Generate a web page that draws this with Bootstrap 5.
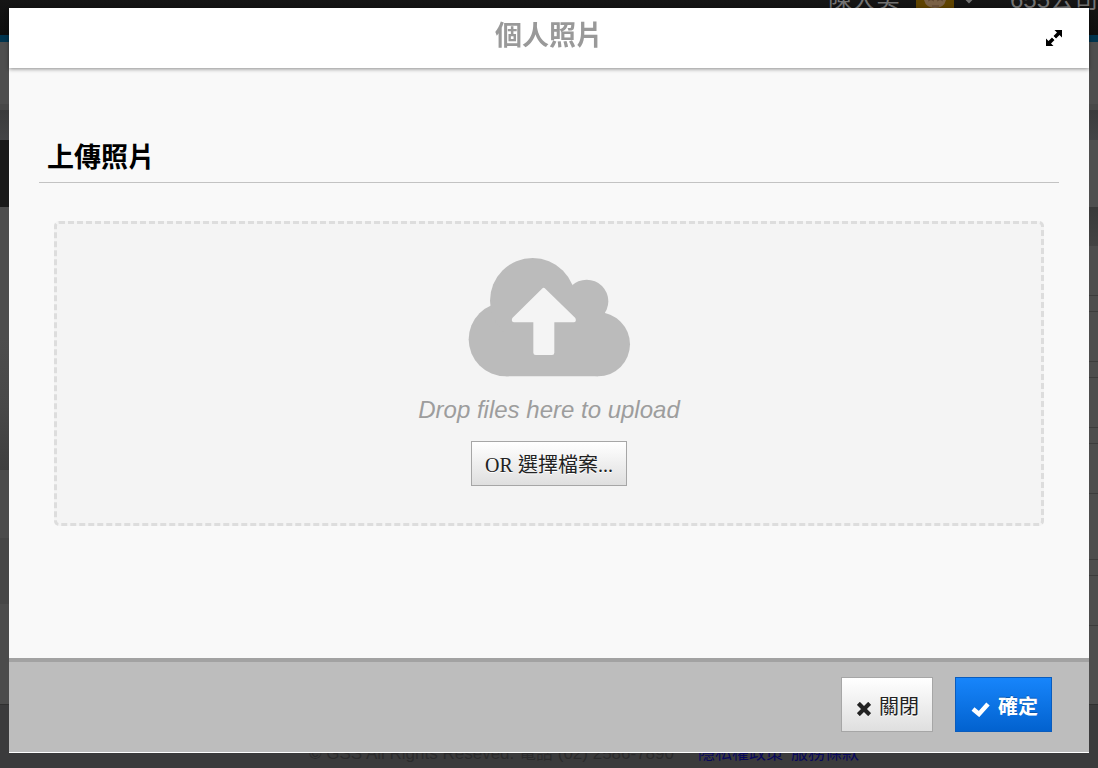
<!DOCTYPE html>
<html lang="zh-Hant">
<head>
<meta charset="utf-8">
<meta name="viewport" content="width=device-width, initial-scale=1">
<title>個人照片</title>
<link href="https://cdn.jsdelivr.net/npm/bootstrap@5.3.0/dist/css/bootstrap.min.css" rel="stylesheet">
<style>
body { font-family: "Liberation Sans", "Noto Sans CJK TC", sans-serif; background: #3b3b3c; }

/* dimmed page */
.site { height: 100vh; overflow: hidden; }
.site-bar { height: 42px; background: linear-gradient(#151515, #0e0e0e); border-bottom: 7px solid #00344e; color: #737373; }
.site-user { font-size: 24px; line-height: 24px; height: 24px; margin-top: -12px; white-space: nowrap; }
.site-nav { height: 68px; background: #4e4e4e; border-bottom: 6px solid #484848; }
.site-band { height: 30px; background: linear-gradient(#3a3b3c, #434446); }
.site-tabs { height: 67px; background: linear-gradient(90deg, #191919 50%, #4f4f4f 50%); }
.site-left { background: linear-gradient(#4d4d4d 0 130px, #484848 200px, #3e3e3e 263px, #4c4c4c 263px 331px, #464646 331px 397px, #4c4c4c 397px); }
.site-right { background: #4d4d4d; }
.site-right .head { height: 39px; background: linear-gradient(#393939, #434343); }
.site-right .line { border-bottom: 1px solid #3c3c3c; }
.line.tall { height: 50px; }
.line.short { height: 16px; }
.line.wide { height: 66px; }
.site-foot { height: 64px; padding: 37px 0 0 70px; font-size: 17px; line-height: 24px; color: #2b2b2c; border-top: 1px solid #303030; background: #3b3b3c; }
.site-foot a { color: #08085c; text-decoration: none; }

/* dialog */
.photo-dialog { padding: 8px 9px 15px; }
.photo-dialog .modal-content { border: 0; border-radius: 0; background: #f9f9f9; border-bottom: 1px solid #fff; }
.photo-dialog .modal-header { height: 60px; padding: 0 23px; border: 0; border-radius: 0; background: #fff; box-shadow: 0 1px 4px rgba(0,0,0,.45); z-index: 1; }
.photo-dialog .modal-title { font-size: 27px; line-height: 40px; font-weight: 700; color: #999; padding-bottom: 4px; }
.plain-btn { width: 24px; height: 24px; border: 0; background: none; padding: 0; }
.photo-dialog .modal-body { padding: 64px 30px 24px; }
.section-title { font-size: 27px; line-height: 40px; font-weight: 700; color: #000; padding: 6px 8px 4px; border-bottom: 1px solid #c3c3c3; margin-bottom: 38px; }
.drop-area { margin: 0 15px; padding: 33px 16px 37px; border: 3px dashed #ddd; border-radius: 5px; background: #f4f4f4; }
.drop-hint { font-size: 24px; line-height: 32px; font-style: italic; color: #9d9d9d; margin: 17px 0 15px; }
.flat-btn { border: 1px solid #a6a6a6; border-radius: 0; background: linear-gradient(#fff, #dfdfdf); color: #222; font-size: 20px; line-height: 24px; text-shadow: 0 1px 0 #fff; }
.pick-btn { font-family: "Liberation Serif", "Noto Sans CJK TC", serif; width: 156px; height: 45px; padding: 2px 0 0; }
.photo-dialog .modal-footer { height: 94px; padding: 0 37px 5px; gap: 22px; border: 0; border-top: 4px solid #a2a2a2; border-radius: 0; background: #bdbdbd; }
.photo-dialog .modal-footer > * { margin: 0; }
.foot-btn { height: 55px; padding: 4px 13px 0 15px; }
.ok-btn { border: 1px solid #0a5cbd; background: linear-gradient(#1785fb, #0262cf); color: #fff; font-weight: 700; text-shadow: 0 -1px 0 rgba(0,0,0,.25); }
</style>
</head>
<body>
<div class="site d-flex flex-column" aria-hidden="true">
  <div class="site-bar d-flex justify-content-end flex-shrink-0">
    <div class="site-user d-flex align-items-center">
      <span>陳大美</span>
      <svg class="ms-3 me-2" width="38" height="24" viewBox="0 0 38 24"><path fill="#5e4300" d="M0 0h38v24H0z"/><path fill="#7a6146" d="M8 0h22v12q-2 8-11 8T8 12z"/><path d="M12 13q3-3 6 0M21 13q3-3 6 0M16 18h7" fill="none" stroke="#5c452f" stroke-width="1"/></svg>
      <svg width="16" height="24" viewBox="0 0 16 24"><path d="M2 9l5 5 5-5" fill="none" stroke="#737373" stroke-width="2"/></svg>
      <span class="ms-4 ps-2">655公司</span>
    </div>
  </div>
  <div class="site-nav flex-shrink-0"></div>
  <div class="site-band flex-shrink-0"></div>
  <div class="site-tabs flex-shrink-0"></div>
  <div class="d-flex flex-grow-1 overflow-hidden">
    <div class="site-left w-50"></div>
    <div class="site-right w-50">
      <div class="head"></div>
      <div class="line tall"></div><div class="line short"></div><div class="line tall"></div><div class="line short"></div>
      <div class="line tall"></div><div class="line short"></div><div class="line tall"></div><div class="line wide"></div>
      <div class="line short"></div><div class="line tall"></div>
    </div>
  </div>
  <div class="site-foot d-flex justify-content-center flex-shrink-0">
    <span>© GSS All Rights Reseved. 電話 (02) 2586-7890</span>
    <a class="ms-4" href="#" tabindex="-1">隱私權政策</a>
    <a class="ms-2" href="#" tabindex="-1">服務條款</a>
  </div>
</div>

<div class="photo-dialog modal d-block overflow-hidden" role="dialog" aria-labelledby="dialogTitle">
  <div class="modal-content h-100">
    <header class="modal-header d-flex align-items-center flex-shrink-0">
      <h1 class="modal-title flex-grow-1 text-center ps-4" id="dialogTitle">個人照片</h1>
      <button type="button" class="plain-btn d-flex align-items-center justify-content-center" aria-label="放大">
        <svg width="18" height="18" viewBox="0 0 18 18"><path d="M9.500 1H17v7.500l-2.500-2.500-3.500 3.500-2.500-2.500L12 3.500zM1 17V9.500L3.500 12 7 8.500 9.500 11 6 14.500 8.500 17z" fill="#000"/><path d="M6 6l6 6" stroke="#fff" stroke-width="1.500"/></svg>
      </button>
    </header>
    <main class="modal-body overflow-hidden">
      <h2 class="section-title">上傳照片</h2>
      <div class="drop-area d-flex flex-column align-items-center">
        <svg width="165" height="120" viewBox="81 51 495 360" aria-hidden="true">
          <g fill="#bbb"><circle cx="197" cy="298" r="111"/><circle cx="278" cy="182" r="128"/><circle cx="440" cy="184" r="65"/><circle cx="474" cy="313" r="96"/><path d="M197 190h277v219H197z"/></g>
          <path d="M306 146q5-5 10 0l90 88q5 12-5 13h-58v91q0 7-7 7h-49q-7 0-7-7v-91h-57q-11-1-6-13z" fill="#f4f4f4"/>
        </svg>
        <p class="drop-hint">Drop files here to upload</p>
        <button type="button" class="btn flat-btn pick-btn">OR 選擇檔案...</button>
      </div>
    </main>
    <footer class="modal-footer d-flex align-items-center justify-content-end flex-nowrap flex-shrink-0">
      <button type="button" class="btn flat-btn foot-btn d-flex align-items-center gap-2">
        <svg class="mt-1" width="14" height="14" viewBox="0 0 15 15" aria-hidden="true"><path d="M3 3l9 9M12 3l-9 9" stroke="#222" stroke-width="4.500" stroke-linecap="square"/></svg>
        <span>關閉</span>
      </button>
      <button type="button" class="btn flat-btn ok-btn foot-btn d-flex align-items-center gap-2">
        <svg class="mt-1" width="19" height="16" viewBox="0 0 19 16" aria-hidden="true"><path d="M2 8l6 5 9-10" fill="none" stroke="#fff" stroke-width="4.500"/></svg>
        <span>確定</span>
      </button>
    </footer>
  </div>
</div>
<script src="https://cdn.jsdelivr.net/npm/bootstrap@5.3.0/dist/js/bootstrap.bundle.min.js"></script>
</body>
</html>
